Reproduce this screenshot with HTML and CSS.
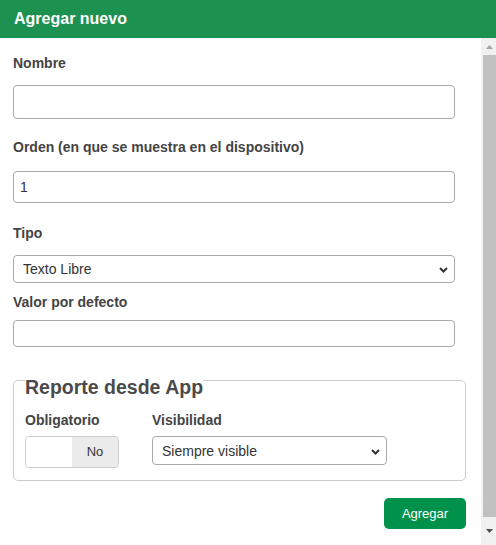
FILE: index.html
```html
<!DOCTYPE html>
<html lang="es">
<head>
  <meta charset="UTF-8" />
  <title>Agregar nuevo</title>
  <link rel="stylesheet" href="styles.css">
</head>
<body>
  <div class="modal">
    <div class="modal-header">Agregar nuevo</div>
    <div class="modal-body">
      <form class="form">
        <div class="field field-nombre">
          <label for="nombre">Nombre</label>
          <input type="text" id="nombre" class="input">
        </div>

        <div class="field field-orden">
          <label for="orden">Orden (en que se muestra en el dispositivo)</label>
          <input type="text" id="orden" class="input" value="1">
        </div>

        <div class="field field-tipo">
          <label for="tipo">Tipo</label>
          <div class="select-wrap">
            <select id="tipo" class="input select">
              <option>Texto Libre</option>
            </select>
            <svg class="chevron" width="9" height="6" viewBox="0 0 9 6"><path d="M1 1 L4.5 4.5 L8 1" fill="none" stroke="#333" stroke-width="2"/></svg>
          </div>
        </div>

        <div class="field field-valor">
          <label for="valor">Valor por defecto</label>
          <input type="text" id="valor" class="input">
        </div>

        <fieldset class="reporte">
          <legend>Reporte desde App</legend>
          <div class="reporte-row">
            <div class="reporte-col">
              <label>Obligatorio</label>
              <div class="toggle">
                <span class="toggle-off"></span>
                <span class="toggle-no">No</span>
              </div>
            </div>
            <div class="reporte-col">
              <label for="visibilidad">Visibilidad</label>
              <div class="select-wrap">
                <select id="visibilidad" class="input select select-vis">
                  <option>Siempre visible</option>
                </select>
                <svg class="chevron" width="9" height="6" viewBox="0 0 9 6"><path d="M1 1 L4.5 4.5 L8 1" fill="none" stroke="#333" stroke-width="2"/></svg>
              </div>
            </div>
          </div>
        </fieldset>

        <div class="actions">
          <button type="submit" class="btn">Agregar</button>
        </div>
      </form>

      <div class="scrollbar">
        <div class="sb-btn">
          <svg width="7" height="4" viewBox="0 0 7 4"><path d="M0 4 L3.5 0 L7 4 Z" fill="#a3a3a3"/></svg>
        </div>
        <div class="sb-thumb"></div>
        <div class="sb-btn sb-btn-down">
          <svg width="7" height="4" viewBox="0 0 7 4"><path d="M0 0 L7 0 L3.5 4 Z" fill="#505050"/></svg>
        </div>
      </div>
    </div>
  </div>
</body>
</html>
```

FILE: styles.css
```css
html, body {
  margin: 0;
  padding: 0;
  background: #fff;
}

body {
  font-family: "Liberation Sans", Arial, sans-serif;
  color: #333;
}

.modal {
  width: 496px;
  height: 545px;
  display: flex;
  flex-direction: column;
}

.modal-header {
  height: 38px;
  flex: none;
  background: #1d9150;
  color: #fff;
  font-size: 16px;
  font-weight: bold;
  line-height: 38px;
  padding-left: 14px;
}

.modal-body {
  flex: 1;
  display: flex;
  overflow: hidden;
}

.form {
  flex: 1;
  display: flex;
  flex-direction: column;
  padding: 15px 15px 0 13px;
  margin: 0;
}

label {
  display: block;
  font-size: 14px;
  font-weight: bold;
  line-height: 20px;
  color: #444;
  margin-bottom: 12px;
}

.input {
  box-sizing: border-box;
  width: 442px;
  height: 34px;
  border: 1px solid #a9a9a9;
  border-radius: 4px;
  font-family: "Liberation Sans", Arial, sans-serif;
  font-size: 14px;
  color: #333;
  padding: 0 6px;
  background: #fff;
  margin: 0;
  display: block;
}

.field-orden {
  margin-top: 18px;
}

.field-orden label {
  margin-bottom: 14px;
}

.field-orden .input {
  height: 32px;
}

.field-tipo {
  margin-top: 20px;
}

.select-wrap {
  position: relative;
  width: max-content;
}

.select {
  -webkit-appearance: none;
  appearance: none;
  height: 28px;
  padding: 0 9px;
}

.chevron {
  position: absolute;
  right: 7px;
  top: 50%;
  margin-top: -2px;
}

.field-valor {
  margin-top: 9px;
}

.field-valor label {
  margin-bottom: 8px;
}

.field-valor .input {
  height: 27px;
}

.reporte {
  margin: 14px 0 0;
  padding: 0 11px 12px;
  border: 1px solid #ccc;
  border-radius: 5px;
}

.reporte legend {
  padding: 15px 0 0;
  font-size: 19.5px;
  font-weight: bold;
  line-height: 23px;
  color: #4a4a4a;
}

.reporte-row {
  display: flex;
  gap: 33px;
  margin-top: 11px;
}

.reporte-col label {
  margin-bottom: 6px;
}

.toggle {
  display: flex;
  width: 94px;
  height: 32px;
  box-sizing: border-box;
  border: 1px solid #ccc;
  border-radius: 4px;
  overflow: hidden;
}

.toggle-off {
  flex: 1;
  background: #fff;
}

.toggle-no {
  width: 46px;
  background: #ebebeb;
  font-size: 13px;
  color: #333;
  text-align: center;
  line-height: 30px;
}

.select-vis {
  width: 235px;
  height: 29px;
  margin-top: 1px;
}

.actions {
  display: flex;
  justify-content: flex-end;
  margin-top: 17px;
}

.btn {
  width: 82px;
  height: 31px;
  border: none;
  border-radius: 5px;
  background: #00924b;
  color: #fff;
  font-family: "Liberation Sans", Arial, sans-serif;
  font-size: 13px;
  cursor: pointer;
}

.scrollbar {
  width: 15px;
  flex: none;
  background: #f1f1f1;
  display: flex;
  flex-direction: column;
}

.sb-btn {
  height: 17px;
  display: flex;
  align-items: center;
  justify-content: center;
  padding-left: 1px;
}

.sb-thumb {
  height: 462px;
  margin-left: 2px;
  background: #c1c1c1;
}

.sb-btn-down {
  height: 28px;
}
```
